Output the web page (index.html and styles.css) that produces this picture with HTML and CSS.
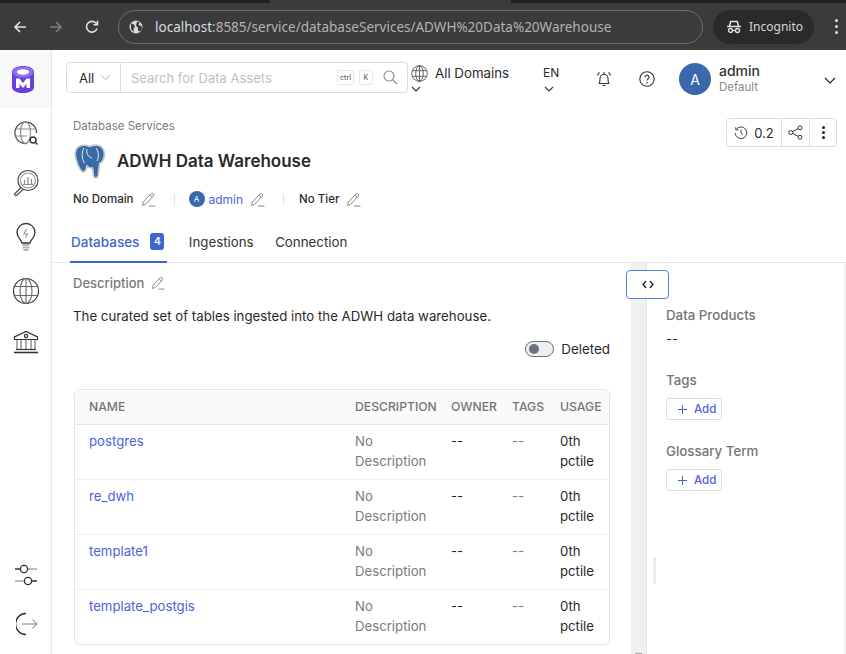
FILE: index.html
```html
<!DOCTYPE html>
<html lang="en">
<head>
    <meta charset="UTF-8">
    <title>ADWH Data Warehouse</title>
    <link rel="stylesheet" href="styles.css">
</head>
<body>
    <div class="browser-strip"><div class="browser-tab"></div></div>
    <div class="browser-bar">
        <svg class="nav-icon" width="16" height="16" viewBox="0 0 16 16"><path d="M14 8H3M8 3L3 8l5 5" fill="none" stroke="#e3e3e3" stroke-width="1.6"/></svg>
        <svg class="nav-icon" width="16" height="16" viewBox="0 0 16 16"><path d="M2 8h11M8 3l5 5-5 5" fill="none" stroke="#7d7d7d" stroke-width="1.6"/></svg>
        <svg class="nav-icon" width="16" height="16" viewBox="0 0 16 16"><path d="M13 9.500A5.400 5.400 0 1 1 11.800 4L13.500 5.600M13.500 1.800v4h-4" fill="none" stroke="#e3e3e3" stroke-width="1.600"/></svg>
        <div class="url-box">
            <svg width="16" height="16" viewBox="0 0 16 16"><circle cx="8" cy="8" r="6.500" fill="#d8d8d8"/><path d="M3 4.500l3 1 1 2.500-1.500 1.500L6 13l-3-3zM9 2.500l2.500 1-1 2.500 3 1 .5 3-2 2.500-2-1 0-3-2-1.500z" fill="#3a3a3a"/></svg>
            <span class="url-text">localhost<span class="url-path">:8585/service/databaseServices/ADWH%20Data%20Warehouse</span></span>
        </div>
        <div class="incognito">
            <svg width="16" height="14" viewBox="0 0 16 14"><path d="M1 6.500h14M3.500 6l1.200-4.500h6.600L12.500 6" fill="none" stroke="#e3e3e3" stroke-width="1.500"/><circle cx="4.500" cy="10.500" r="2" fill="none" stroke="#e3e3e3" stroke-width="1.300"/><circle cx="11.500" cy="10.500" r="2" fill="none" stroke="#e3e3e3" stroke-width="1.300"/><path d="M6.500 10.500h3" stroke="#e3e3e3" stroke-width="1.200"/></svg>
            <span>Incognito</span>
        </div>
        <div class="browser-menu"><i></i><i></i><i></i></div>
    </div>

    <div class="app">
        <aside class="sidebar">
            <div class="logo-cell">
                <svg width="22" height="27" viewBox="0 0 22 27"><path d="M0 6c0-8 22-8 22 0v15c0 8-22 8-22 0z" fill="#6a3fe0"/><ellipse cx="11" cy="6" rx="10.500" ry="5.500" fill="#8f70ee"/><ellipse cx="11" cy="6" rx="6" ry="2.700" fill="#fff"/><path d="M4 22v-9.500h3.500L11 17l3.500-4.500H18V22h-3.500v-4L11 22l-3.500-4v4z" fill="#fff"/></svg>
            </div>
            <div class="side-icons">
                <svg class="side-icon" width="26" height="26" viewBox="0 0 26 26"><g fill="none" stroke="#3b3b3b" stroke-width="1.200"><path d="M14 23.500A10.800 10.800 0 1 1 23.500 13"/><ellipse cx="12.500" cy="12.500" rx="5" ry="10.800" stroke="#8a8a8a"/><path d="M2 9h21M2 16h12" stroke="#8a8a8a"/><circle cx="20" cy="20" r="3" stroke-width="1.500"/><path d="M22 22l2.500 2.500" stroke-width="1.500"/></g></svg>
                <svg class="side-icon icon-explore" width="28" height="28" viewBox="0 0 28 28"><g fill="none" stroke="#4a4a4a" stroke-width="1.200"><circle cx="16" cy="11.500" r="10"/><circle cx="16" cy="11.500" r="7.500" stroke="#9a9a9a"/><path d="M12.500 15V11M16 15V8M19.500 15v-5M11 15.500h10" stroke="#8a8a8a"/><path d="M9 18.500L2.500 25a1.500 1.500 0 0 0 2 1.500L11 20.500"/></g></svg>
                <svg class="side-icon icon-bulb" width="22" height="30" viewBox="0 0 22 30"><path d="M7 21c0-3-5-5-5-10.500a9 9 0 0 1 18 0C20 16 15 18 15 21z" fill="none" stroke="#333" stroke-width="1.300"/><path d="M11.500 7L9 12h3.500L10.500 16" fill="none" stroke="#9a9a9a" stroke-width="1.200"/><path d="M7.500 23h7M7.500 25.500h7M8.500 28h5" stroke="#b5b5b5" stroke-width="1.800"/></svg>
                <svg class="side-icon icon-globe" width="28" height="28" viewBox="0 0 28 28"><g fill="none" stroke="#666" stroke-width="1.100"><circle cx="14" cy="14" r="12.500" stroke="#333"/><ellipse cx="14" cy="14" rx="6" ry="12.500"/><path d="M14 1.500v25M2.500 9.500h23M2.500 18.500h23"/></g></svg>
                <svg class="side-icon icon-bank" width="26" height="24" viewBox="0 0 26 24"><g fill="none" stroke="#333" stroke-width="1.200"><path d="M1.500 9.500V7L13 1.500 24.500 7v2.500z"/><circle cx="13" cy="6" r="1.600"/><path d="M4 10v9M8 10v9M13 10v9M18 10v9M22 10v9" stroke="#777"/><path d="M3 19.500h20"/><path d="M1 22.500h24" stroke-width="1.600"/></g></svg>
            </div>
            <div class="side-bottom">
                <svg class="side-icon" width="24" height="22" viewBox="0 0 24 22"><g fill="none" stroke-width="1.300"><path d="M14 5h9M1 17h9" stroke="#aaa"/><path d="M1 5h5.400M17.600 17H23" stroke="#333"/><circle cx="10" cy="5" r="3.600" stroke="#333"/><circle cx="14" cy="17" r="3.600" stroke="#333"/></g></svg>
                <svg class="side-icon icon-logout" width="22" height="24" viewBox="0 0 22 24"><path d="M10 1.500a10.500 10.500 0 0 0 0 21" fill="none" stroke="#333" stroke-width="1.400"/><path d="M6 12h15M16.500 7.500L21 12l-4.500 4.500" fill="none" stroke="#aaa" stroke-width="1.300"/></svg>
            </div>
        </aside>

        <div class="main">
            <header class="topbar">
                <div class="search">
                    <div class="search-scope"><span>All</span><svg width="11" height="7" viewBox="0 0 11 7"><path d="M1 1l4.500 4.500L10 1" fill="none" stroke="#b5b5b5" stroke-width="1"/></svg></div>
                    <div class="search-input">
                        <span class="search-placeholder">Search for Data Assets</span>
                        <kbd class="key">ctrl</kbd><kbd class="key">K</kbd>
                        <svg class="search-glass" width="15" height="15" viewBox="0 0 15 15"><circle cx="6" cy="6" r="5" fill="none" stroke="#8a8a8a" stroke-width="1.100"/><path d="M9.800 9.800L14 14" stroke="#8a8a8a" stroke-width="1.200"/></svg>
                    </div>
                </div>
                <div class="domain">
                    <svg width="17" height="17" viewBox="0 0 17 17"><g fill="none" stroke="#555" stroke-width=".9"><circle cx="8.500" cy="8.500" r="7.800"/><ellipse cx="8.500" cy="8.500" rx="3.800" ry="7.800"/><path d="M8.500 .7v15.600M1.300 5.700h14.400M1.300 11.300h14.400"/></g></svg>
                    <span class="domain-text">All Domains</span>
                    <svg class="domain-caret caret" width="10" height="6" viewBox="0 0 10 6"><path d="M1 1l4 4 4-4" fill="none" stroke="#333" stroke-width="1.100"/></svg>
                </div>
                <div class="lang">
                    <span>EN</span>
                    <svg class="caret" width="10" height="6" viewBox="0 0 10 6"><path d="M1 1l4 4 4-4" fill="none" stroke="#333" stroke-width="1.100"/></svg>
                </div>
                <svg class="top-icon bell" width="16" height="17" viewBox="0 0 16 17"><path d="M3.200 12.500c.8-1.500.8-3 .8-5a4 4 0 0 1 8 0c0 2 0 3.500.8 5zM6.500 14.500h3M8 1v2M1.500 4.500A5 5 0 0 1 3.500 1.500M14.500 4.500a5 5 0 0 0-2-3" fill="none" stroke="#333" stroke-width="1.100"/></svg>
                <svg class="top-icon help" width="16" height="16" viewBox="0 0 16 16"><circle cx="8" cy="8" r="7.200" fill="none" stroke="#333" stroke-width="1.100"/><path d="M6 6.200a2 2 0 1 1 3 1.700c-.7.400-1 .8-1 1.600" fill="none" stroke="#333" stroke-width="1.100"/><circle cx="8" cy="11.700" r=".8" fill="#333"/></svg>
                <div class="user">
                    <div class="avatar">A</div>
                    <div class="user-text">
                        <div class="user-name">admin</div>
                        <div class="user-role">Default</div>
                    </div>
                </div>
                <svg class="user-caret" width="12" height="7" viewBox="0 0 12 7"><path d="M1 1l5 5 5-5" fill="none" stroke="#222" stroke-width="1.200"/></svg>
            </header>

            <section class="entity">
                <div class="entity-head">
                    <div>
                        <div class="breadcrumb">Database Services</div>
                        <div class="entity-title">
                            <svg width="33" height="35" viewBox="0 0 33 35"><path d="M7 2C10 .5 14 1.500 16.500 2.500C19 1.500 24 .5 27 2C31 4 32 9 31 13C30 17 28 19 26.500 19.500C26 23 26 28 25 32C24 34.500 21 34.500 20.500 32C20 29 20 26 19.500 24C17 24.500 15 23 14 22C13.500 25 12 28.500 10 28C7 27 4.500 20 3 15C1.500 10 2 4 7 2Z" fill="#3a6aa6" stroke="#c4c8cc" stroke-width="1.600"/><path d="M11 4C8 9 9 15 11.500 19M14 5C13 9 15 13 19 14M23 4c3 4 3 9 1 13" fill="none" stroke="#fff" stroke-width=".9"/></svg>
                            <h1>ADWH Data Warehouse</h1>
                        </div>
                    </div>
                    <div class="entity-actions">
                        <div class="action action-version">
                            <svg width="14" height="14" viewBox="0 0 14 14"><path d="M2.200 3.500A5.800 5.800 0 1 1 1.200 7M1.800 1.200v2.600h2.600M7 3.800V7l2 1.500" fill="none" stroke="#444" stroke-width="1"/></svg>
                            <span>0.2</span>
                        </div>
                        <div class="action">
                            <svg width="15" height="15" viewBox="0 0 15 15"><g fill="none" stroke="#333" stroke-width="1"><circle cx="2.800" cy="7.500" r="2"/><circle cx="12" cy="2.800" r="2"/><circle cx="12" cy="12.200" r="2"/><path d="M4.600 6.600l5.600-3M4.600 8.400l5.600 3"/></g></svg>
                        </div>
                        <div class="action action-more"><i></i><i></i><i></i></div>
                    </div>
                </div>
                <div class="entity-meta">
                    <span class="meta-item">No Domain</span>
                    <svg class="pencil" width="15" height="15" viewBox="0 0 15 15"><use href="#pencil"/></svg>
                    <span class="meta-sep"></span>
                    <span class="mini-avatar">A</span>
                    <span class="meta-owner">admin</span>
                    <svg class="pencil" width="15" height="15" viewBox="0 0 15 15"><use href="#pencil"/></svg>
                    <span class="meta-sep meta-sep-wide"></span>
                    <span class="meta-item">No Tier</span>
                    <svg class="pencil" width="15" height="15" viewBox="0 0 15 15"><use href="#pencil"/></svg>
                </div>
                <nav class="tabs">
                    <div class="tab tab-active">Databases <span class="tab-count">4</span></div>
                    <div class="tab">Ingestions</div>
                    <div class="tab">Connection</div>
                </nav>
            </section>

            <div class="content">
                <div class="left-panel">
                    <div class="desc-label">Description
                        <svg class="pencil" width="14" height="14" viewBox="0 0 15 15"><use href="#pencil"/></svg>
                    </div>
                    <p class="desc-text">The curated set of tables ingested into the ADWH data warehouse.</p>
                    <div class="deleted-row">
                        <span class="switch"><i></i></span>
                        <span>Deleted</span>
                    </div>
                    <div class="table-wrap">
                        <table class="db-table">
                            <thead>
                                <tr><th class="col-name">NAME</th><th class="col-desc">DESCRIPTION</th><th class="col-owner">OWNER</th><th class="col-tags">TAGS</th><th>USAGE</th></tr>
                            </thead>
                            <tbody>
                                <tr><td><a>postgres</a></td><td class="muted">No Description</td><td>--</td><td class="muted">--</td><td>0th pctile</td></tr>
                                <tr><td><a>re_dwh</a></td><td class="muted">No Description</td><td>--</td><td class="muted">--</td><td>0th pctile</td></tr>
                                <tr><td><a>template1</a></td><td class="muted">No Description</td><td>--</td><td class="muted">--</td><td>0th pctile</td></tr>
                                <tr><td><a>template_postgis</a></td><td class="muted">No Description</td><td>--</td><td class="muted">--</td><td>0th pctile</td></tr>
                            </tbody>
                        </table>
                    </div>
                </div>
                <div class="gutter"><span class="gutter-tick"></span></div>
                <aside class="right-panel">
                    <button class="collapse-btn"><svg width="12" height="9" viewBox="0 0 12 9"><path d="M4 1L1 4.500 4 8M8 1l3 3.500L8 8" fill="none" stroke="#222" stroke-width="1.300"/></svg></button>
                    <span class="drag-handle"></span>
                    <h3>Data Products</h3>
                    <div class="dash">--</div>
                    <h3 class="tags-title">Tags</h3>
                    <button class="add-btn"><svg width="9" height="9" viewBox="0 0 9 9"><path d="M4.500 0v9M0 4.500h9" stroke="#3f66d0" stroke-width="1"/></svg>Add</button>
                    <h3 class="glossary-title">Glossary Term</h3>
                    <button class="add-btn"><svg width="9" height="9" viewBox="0 0 9 9"><path d="M4.500 0v9M0 4.500h9" stroke="#3f66d0" stroke-width="1"/></svg>Add</button>
                </aside>
            </div>
        </div>
    </div>

    <svg class="defs" width="0" height="0"><defs><symbol id="pencil" viewBox="0 0 15 15"><path d="M1.500 13.500l.8-3.500 7.500-8a1.500 1.500 0 0 1 2.400 2.200L4.700 12.300zM8.800 3.200l2.500 2.400M8 14h6.500" fill="none" stroke="#8a8a8a" stroke-width="1"/></symbol></defs></svg>
</body>
</html>
```

FILE: styles.css
```css
html, body {
    margin: 0;
    height: 654px;
    overflow: hidden;
}
body {
    font-family: Inter, "Noto Sans", sans-serif;
    font-size: 13px;
    color: #292929;
    background-color: #fff;
}

/* browser chrome */
.browser-strip {
    height: 3px;
    background-color: #202124;
}
.browser-tab {
    height: 3px;
    margin-left: 270px;
    width: 241px;
    background-color: #3b3b3b;
}
.browser-bar {
    display: flex;
    align-items: center;
    height: 47px;
    background-color: #3b3b3b;
    padding-left: 12px;
    box-sizing: border-box;
}
.nav-icon {
    margin-right: 20px;
}
.nav-icon:nth-child(3) {
    margin-right: 18px;
}
.url-box {
    display: flex;
    align-items: center;
    gap: 11px;
    width: 585px;
    height: 34px;
    padding-left: 9px;
    box-sizing: border-box;
    border: 1px solid #6f6f6f;
    border-radius: 17px;
    background-color: #3b3b3b;
}
.url-text {
    font-family: "Noto Sans", sans-serif;
    font-size: 13.500px;
    color: #d5dfe6;
    white-space: nowrap;
}
.url-path {
    color: #b3b3b3;
}
.incognito {
    display: flex;
    align-items: center;
    gap: 7px;
    margin-left: 10px;
    width: 101px;
    height: 34px;
    padding-left: 13px;
    box-sizing: border-box;
    border-radius: 17px;
    background-color: #2a2a2a;
    color: #d8d8d8;
    font-family: "Noto Sans", sans-serif;
    font-size: 12px;
}
.browser-menu {
    display: flex;
    flex-direction: column;
    gap: 3px;
    margin-left: 21px;
}
.browser-menu i {
    display: block;
    width: 3px;
    height: 3px;
    border-radius: 50%;
    background-color: #e3e3e3;
}

/* app shell */
.app {
    display: flex;
    height: 604px;
}
.sidebar {
    display: flex;
    flex-direction: column;
    align-items: center;
    width: 52px;
    flex: none;
    box-sizing: border-box;
    border-right: 1px solid #e5e5e5;
}
.logo-cell {
    display: flex;
    align-items: center;
    width: 51px;
    height: 58px;
    padding-left: 12px;
    box-sizing: border-box;
    background-color: #f8f8f8;
}
.side-icons {
    display: flex;
    flex-direction: column;
    align-items: center;
    padding-top: 12px;
}
.side-icon {
    display: block;
}
.icon-explore {
    margin-top: 23px;
}
.icon-bulb {
    margin-top: 25px;
}
.icon-globe {
    margin-top: 25px;
}
.icon-bank {
    margin-top: 25px;
}
.side-bottom {
    margin-top: auto;
    padding-bottom: 18px;
}
.icon-logout {
    margin: 26px 0 0 2px;
}
.main {
    flex: 1;
    min-width: 0;
    display: flex;
    flex-direction: column;
}

/* top bar */
.topbar {
    display: flex;
    align-items: flex-start;
    height: 58px;
    padding: 12px 0 0 14px;
    box-sizing: border-box;
    flex: none;
}
.search {
    display: flex;
    width: 342px;
    height: 31px;
    box-sizing: border-box;
    border: 1px solid #dcdcdc;
    border-radius: 4px;
}
.search-scope {
    display: flex;
    align-items: center;
    gap: 6px;
    width: 54px;
    padding-left: 12px;
    box-sizing: border-box;
    border-right: 1px solid #dcdcdc;
}
.search-input {
    flex: 1;
    display: flex;
    align-items: center;
    padding-left: 10px;
}
.search-placeholder {
    flex: 1;
    color: #c0c0c0;
    font-size: 13px;
}
.key {
    display: block;
    height: 13px;
    line-height: 13px;
    padding: 0 2px;
    margin-right: 5px;
    min-width: 8px;
    text-align: center;
    border: 1px solid #e8e8e8;
    border-radius: 2px;
    font-family: Inter, sans-serif;
    font-size: 7px;
    font-weight: 500;
    color: #666;
}
.search-glass {
    margin: 0 9px 0 5px;
}
.domain {
    position: relative;
    display: flex;
    align-items: flex-start;
    width: 132px;
    margin-left: 3px;
    padding-top: 3px;
    gap: 7px;
}
.domain-text {
    line-height: 16px;
    font-size: 13.300px;
}
.domain-caret {
    position: absolute;
    left: 0;
    top: 24px;
}
.lang {
    display: flex;
    flex-direction: column;
    gap: 5px;
    width: 53px;
    padding-top: 3px;
    line-height: 16px;
    font-size: 12px;
}
.caret {
    display: block;
}
.lang .caret {
    margin-left: 1px;
}
.top-icon {
    margin-top: 9px;
}
.bell {
    margin-right: 27px;
}
.help {
    margin-right: 24px;
}
.user {
    display: flex;
    gap: 8px;
    width: 145px;
    margin-top: 1px;
}
.avatar {
    display: flex;
    align-items: center;
    justify-content: center;
    width: 32px;
    height: 32px;
    border-radius: 50%;
    background-color: #3b67ad;
    color: #fff;
    font-size: 14px;
}
.user-name {
    font-size: 14px;
    font-weight: 500;
    line-height: 16px;
    color: #333;
}
.user-role {
    font-size: 11.500px;
    line-height: 16px;
    color: #8a8a8a;
}
.user-caret {
    margin-top: 15px;
}

/* entity header */
.entity {
    flex: none;
    border-bottom: 1px solid #e5e5e5;
}
.entity-head {
    display: flex;
    justify-content: space-between;
    padding: 10px 9px 0 21px;
}
.breadcrumb {
    font-size: 11.500px;
    line-height: 16px;
    color: #7b7b7b;
}
.entity-title {
    display: flex;
    align-items: center;
    gap: 11px;
    margin-top: 9px;
    height: 36px;
}
.entity-title h1 {
    margin: 0;
    font-size: 17px;
    font-weight: 600;
    color: #292929;
}
.entity-actions {
    display: flex;
    width: 111px;
    height: 29px;
    box-sizing: border-box;
    border: 1px solid #dedede;
    border-radius: 4px;
}
.action {
    display: flex;
    align-items: center;
    justify-content: center;
    width: 28px;
    border-left: 1px solid #dedede;
}
.action-version {
    width: 55px;
    gap: 6px;
    border-left: none;
}
.action-more {
    flex-direction: column;
    gap: 2px;
    width: 26px;
}
.action-more i {
    display: block;
    width: 3px;
    height: 3px;
    border-radius: 50%;
    background-color: #222;
}
.entity-meta {
    display: flex;
    align-items: center;
    height: 20px;
    margin: 10px 0 0 21px;
}
.meta-item {
    font-size: 11.500px;
    font-weight: 500;
    color: #292929;
}
.pencil {
    margin-left: 7px;
}
.meta-sep {
    width: 1px;
    height: 11px;
    margin: 0 14px 0 18px;
    background-color: #e0e0e0;
}
.meta-sep-wide {
    margin: 0 15px 0 18px;
}
.mini-avatar {
    display: flex;
    align-items: center;
    justify-content: center;
    width: 16px;
    height: 16px;
    border-radius: 50%;
    background-color: #3b67ad;
    color: #fff;
    font-size: 8px;
}
.meta-owner {
    margin-left: 4px;
    font-size: 12px;
    color: #4f5fe0;
}
.tabs {
    display: flex;
    gap: 21.500px;
    height: 40px;
    margin: 13px 0 0 18px;
}
.tab {
    display: flex;
    align-items: center;
    height: 40px;
    font-size: 13.300px;
    color: #333;
}
.tab-active {
    gap: 11px;
    height: 39px;
    padding: 0 3px 0 1px;
    font-size: 13.500px;
    font-weight: 500;
    color: #3f66d0;
    border-bottom: 2px solid #3f66d0;
}
.tab-count {
    display: inline-block;
    width: 14px;
    height: 17px;
    line-height: 17px;
    text-align: center;
    border-radius: 3px;
    background-color: #3f66d0;
    color: #fff;
    font-size: 11px;
}

/* content */
.content {
    flex: 1;
    min-height: 0;
    display: flex;
}
.left-panel {
    width: 579px;
    flex: none;
    padding: 11px 21px 0 22px;
    box-sizing: border-box;
}
.desc-label {
    display: flex;
    align-items: center;
    font-size: 13px;
    line-height: 18px;
    color: #7b7b7b;
    font-weight: 500;
    margin-left: -1px;
}
.desc-text {
    margin: 15px 0 0 -1px;
    font-size: 13.250px;
    line-height: 18px;
    color: #292929;
}
.deleted-row {
    display: flex;
    justify-content: flex-end;
    align-items: center;
    gap: 7px;
    margin-top: 15px;
    height: 18px;
    font-size: 13.400px;
}
.switch {
    display: block;
    width: 29px;
    height: 16px;
    box-sizing: border-box;
    padding: 2px 3px;
    border: 1px solid #6b7085;
    border-radius: 8px;
    background-color: #eee;
}
.switch i {
    display: block;
    width: 10px;
    height: 10px;
    border-radius: 50%;
    background-color: #6b7085;
}
.table-wrap {
    margin-top: 31px;
    border: 1px solid #e5e5e5;
    border-radius: 6px;
    overflow: hidden;
}
.db-table {
    width: 100%;
    border-collapse: collapse;
    table-layout: fixed;
    font-size: 13.200px;
}
.db-table th {
    box-sizing: border-box;
    height: 34px;
    padding: 0 0 0 5px;
    text-align: left;
    font-size: 12.200px;
    font-weight: 500;
    color: #757575;
    background-color: #fafafa;
    border-bottom: 1px solid #e9e9e9;
    white-space: nowrap;
}
.db-table td {
    height: 55px;
    padding: 6px 8px 8px 5px;
    box-sizing: border-box;
    vertical-align: top;
    line-height: 20px;
    border-bottom: 1px solid #eee;
}
.db-table th:first-child,
.db-table td:first-child {
    padding-left: 14px;
}
.db-table tr:last-child td {
    border-bottom: none;
}
.db-table a {
    color: #4f5fe0;
}
.muted {
    color: #7b7b7b;
}
.col-name {
    width: 275px;
}
.col-desc {
    width: 96px;
}
.col-owner {
    width: 61px;
}
.col-tags {
    width: 48px;
}
.gutter {
    position: relative;
    width: 16px;
    flex: none;
    box-sizing: border-box;
    background-color: #f0f0f0;
    border-right: 1px solid #e5e5e5;
}
.gutter-tick {
    position: absolute;
    left: 4px;
    bottom: 0;
    width: 7px;
    height: 1px;
    background-color: #aaa;
}
.right-panel {
    position: relative;
    flex: 1;
    padding: 44px 0 0 19px;
    border-right: 2px solid #f2f2f2;
}
.right-panel h3 {
    margin: 0;
    font-size: 13.300px;
    line-height: 16px;
    font-weight: 500;
    color: #757575;
}
.dash {
    margin-top: 7px;
    line-height: 18px;
    font-size: 13px;
}
.right-panel .tags-title {
    margin-top: 24px;
}
.right-panel .glossary-title {
    margin-top: 23px;
}
.add-btn {
    display: flex;
    align-items: center;
    gap: 7px;
    width: 56px;
    height: 22px;
    margin-top: 10px;
    padding: 0 0 0 11px;
    box-sizing: border-box;
    border: 1px solid #dedede;
    border-radius: 3px;
    background-color: #fff;
    color: #4f5fe0;
    font-family: Inter, sans-serif;
    font-size: 11.500px;
    font-weight: 500;
}
/* sits over the splitter */
.collapse-btn {
    position: absolute;
    left: -21px;
    top: 7px;
    display: flex;
    align-items: center;
    justify-content: center;
    width: 43px;
    height: 29px;
    padding: 0;
    border: 1px solid #4d7fea;
    border-radius: 4px;
    background-color: #fff;
}
.drag-handle {
    position: absolute;
    left: 6px;
    top: 294px;
    width: 3px;
    height: 27px;
    background-color: #ededed;
}
.defs {
    position: absolute;
}
```
